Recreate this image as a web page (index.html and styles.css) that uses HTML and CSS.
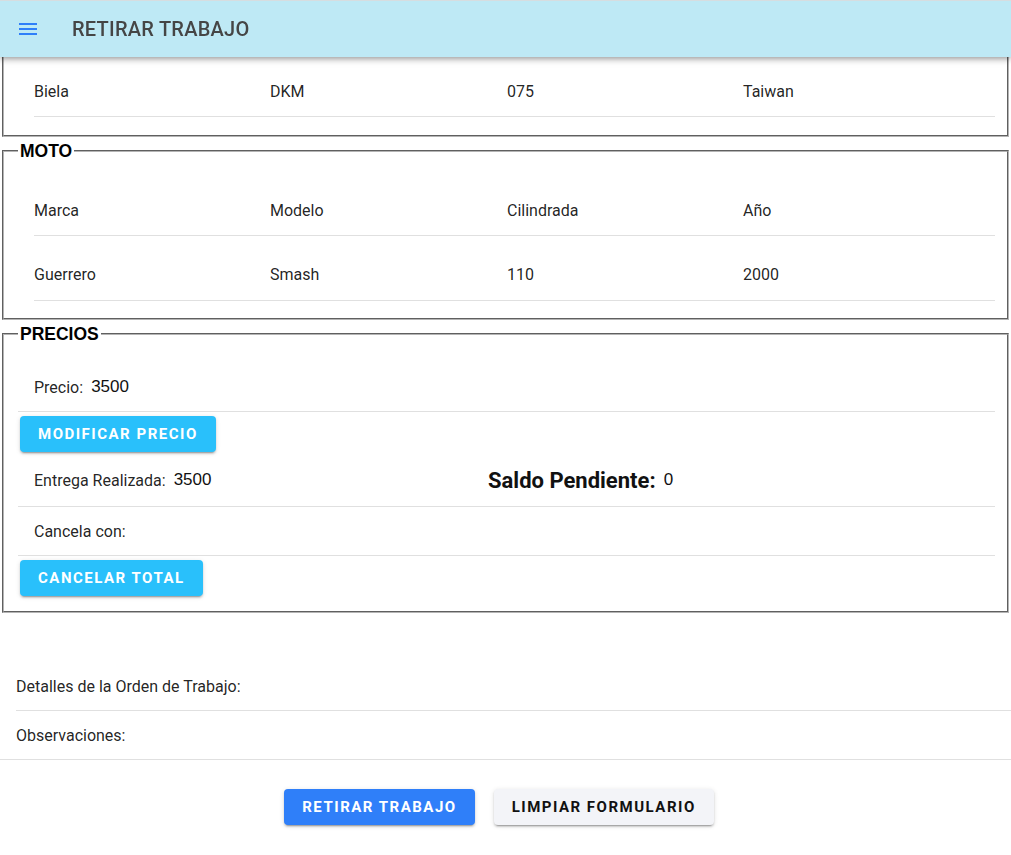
FILE: index.html
```html
<!DOCTYPE html>
<html lang="es">
<head>
<meta charset="utf-8">
<title>Retirar Trabajo</title>
<link rel="stylesheet" href="styles.css">
</head>
<body>
<header class="app-bar">
  <button class="nav-icon" aria-label="menu">
    <svg viewBox="0 0 24 24" width="24" height="24"><path d="M3,6H21V8H3V6M3,11H21V13H3V11M3,16H21V18H3V16Z" fill="#2f7ff9"/></svg>
  </button>
  <div class="app-title">RETIRAR TRABAJO</div>
</header>

<main class="content">
  <fieldset class="box box-cut">
    <div class="grid-row"><span>Biela</span><span>DKM</span><span>075</span><span>Taiwan</span></div>
  </fieldset>

  <fieldset class="box box-moto">
    <legend>MOTO</legend>
    <div class="grid-row"><span>Marca</span><span>Modelo</span><span>Cilindrada</span><span>Año</span></div>
    <div class="grid-row"><span>Guerrero</span><span>Smash</span><span>110</span><span>2000</span></div>
  </fieldset>

  <fieldset class="box box-precios">
    <legend>PRECIOS</legend>
    <div class="p-row p-precio"><span class="lbl">Precio:</span><span class="val">3500</span></div>
    <button class="btn btn-light">MODIFICAR PRECIO</button>
    <div class="p-row p-entrega">
      <div class="half"><span class="lbl">Entrega Realizada:</span><span class="val">3500</span></div>
      <div class="half"><span class="saldo">Saldo Pendiente:</span><span class="val">0</span></div>
    </div>
    <div class="p-row p-cancela"><span class="lbl">Cancela con:</span></div>
    <button class="btn btn-light">CANCELAR TOTAL</button>
  </fieldset>

  <section class="details">
    <div class="d-row d-inset">Detalles de la Orden de Trabajo:</div>
    <div class="d-row d-full">Observaciones:</div>
  </section>

  <div class="actions">
    <button class="btn btn-primary">RETIRAR TRABAJO</button>
    <button class="btn btn-grey">LIMPIAR FORMULARIO</button>
  </div>
</main>
</body>
</html>
```

FILE: styles.css
```css
* { box-sizing: border-box; }

html, body {
  margin: 0;
  padding: 0;
  background: #ffffff;
}

body {
  font-family: Roboto, "Liberation Sans", sans-serif;
  color: rgba(0, 0, 0, 0.87);
  font-size: 16px;
}

/* ---------- app bar ---------- */
.app-bar {
  position: fixed;
  top: 0;
  left: 0;
  right: 0;
  height: 57px;
  background: #bee9f5;
  border-top: 1px solid #d6dde0;
  display: flex;
  align-items: center;
  z-index: 10;
  box-shadow: 0 2px 4px -1px rgba(0,0,0,.2), 0 4px 5px 0 rgba(0,0,0,.14), 0 1px 10px 0 rgba(0,0,0,.12);
}

.nav-icon {
  margin-left: 16px;
  width: 24px;
  height: 24px;
  padding: 0;
  border: 0;
  background: transparent;
  display: flex;
}

.app-title {
  margin-left: 32px;
  font-size: 20px;
  font-weight: 500;
  color: #454545;
  letter-spacing: 0.25px;
}

/* ---------- fieldsets ---------- */
.box {
  margin: 4px 2px 0 2px;
  padding: 10px 12px 17px 14px;
  min-width: 0;
  border: 2px groove #b4b4b4;
}

.box legend {
  font-family: "Liberation Sans", Arial, sans-serif;
  font-weight: 700;
  font-size: 17.5px;
  color: #000;
  padding: 0 2px;
  line-height: 20px;
}

.box-cut {
  margin-top: 0;
  border-top: none;
  padding-top: 52px;
  padding-bottom: 18px;
}

.grid-row {
  margin-left: 16px;
  display: grid;
  grid-template-columns: 236px 237px 236px 1fr;
  align-items: center;
  padding-top: 14px;
  height: 65px;
  border-bottom: 1px solid #e0e0e0;
  font-size: 16px;
}

.box-moto .grid-row:last-child {
  padding-top: 12px;
}

/* ---------- precios ---------- */
.box-precios {
  padding-top: 17px;
  padding-bottom: 15px;
}

.p-row {
  display: flex;
  align-items: center;
  padding-left: 16px;
  border-bottom: 1px solid #e0e0e0;
}

.p-precio { height: 51px; padding-top: 2px; }
.p-entrega { height: 55px; padding-top: 2px; }
.p-cancela { height: 49px; }

.half {
  display: flex;
  align-items: center;
}

.half:first-child { width: 454px; }

.lbl {
  font-size: 16px;
}

.val {
  font-family: "Liberation Sans", Arial, sans-serif;
  font-size: 17px;
  color: #111;
  margin-left: 8px;
}

.saldo {
  font-size: 22px;
  font-weight: 700;
  color: #111;
}

/* ---------- buttons ---------- */
.btn {
  height: 36px;
  padding: 0 18px;
  border: 0;
  border-radius: 4px;
  font-family: Roboto, "Liberation Sans", sans-serif;
  font-size: 15px;
  font-weight: 700;
  letter-spacing: 1.5px;
  display: inline-flex;
  align-items: center;
  justify-content: center;
  box-shadow: 0 3px 1px -2px rgba(0,0,0,.2), 0 2px 2px 0 rgba(0,0,0,.14), 0 1px 5px 0 rgba(0,0,0,.12);
}

.btn-light {
  background: #29c0fb;
  color: #ffffff;
  margin: 4px 0 0 2px;
}

.btn-primary {
  background: #2f7ff9;
  color: #ffffff;
}

.btn-grey {
  background: #f3f4f8;
  color: #111111;
}

/* ---------- details ---------- */
.details {
  margin-top: 49px;
}

.d-row {
  height: 49px;
  display: flex;
  align-items: center;
  border-bottom: 1px solid #e0e0e0;
  font-size: 16px;
}

.d-inset { margin-left: 16px; }
.d-full { padding-left: 16px; height: 49px; }

/* ---------- actions ---------- */
.actions {
  margin-top: 29px;
  display: flex;
  justify-content: center;
  gap: 19px;
  padding-right: 13px;
  padding-bottom: 30px;
}
```
